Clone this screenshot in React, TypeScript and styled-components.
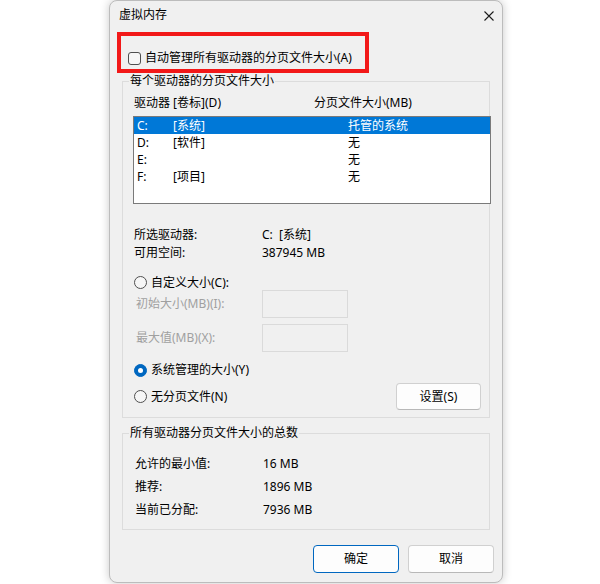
import React from "react";
import styled, { createGlobalStyle } from "styled-components";

const Global = createGlobalStyle`
  html, body { margin: 0; padding: 0; background: #ffffff; }
  body {
    font-family: "Microsoft YaHei UI", "Noto Sans", "Noto Sans CJK SC", sans-serif;
    font-size: 12px;
    color: #000000;
  }
  * { box-sizing: border-box; }
`;

const Desktop = styled.div`
  width: 600px;
  height: 584px;
  overflow: hidden;
  background: #ffffff;
  padding-left: 109px;
`;

const Window = styled.div`
  width: 394px;
  height: 583px;
  background: #f0f0f0;
  border: 1px solid #bcbcbc;
  border-radius: 8px;
  box-shadow: 0 0 10px rgba(0, 0, 0, 0.22);
  display: flex;
  flex-direction: column;
`;

const TitleBar = styled.div`
  height: 29px;
  display: flex;
  align-items: center;
  justify-content: space-between;
  padding: 0 8px 0 9px;
`;

const Title = styled.span`
  line-height: 16px;
  margin-top: -2px;
`;

const CloseButton = styled.div`
  width: 10px;
  height: 10px;
  display: flex;
`;

const Body = styled.div`
  display: flex;
  flex-direction: column;
  padding: 0 12px;
`;

const Highlight = styled.div`
  margin: 2px 0 0 -5px;
  width: 252px;
  height: 41px;
  border: 4px solid #f21818;
  padding: 11px 0 0 7px;
  display: flex;
  align-items: center;
  gap: 4px;
  line-height: 16px;
`;

const CheckBox = styled.span`
  width: 13px;
  height: 13px;
  border: 1px solid #4f4f4f;
  border-radius: 3px;
  background: #f6f6f6;
  flex: none;
`;

const Group = styled.div<{ $top: number; $bottom: number }>`
  margin-top: ${(p) => p.$top}px;
  border: 1px solid #dcdcdc;
  display: flex;
  flex-direction: column;
  padding-bottom: ${(p) => p.$bottom}px;
`;

const Legend = styled.span`
  align-self: flex-start;
  margin: -9px 0 0 6px;
  padding: 0 1px;
  background: #f0f0f0;
  line-height: 16px;
  height: 16px;
`;

const ColumnHeader = styled.div`
  display: grid;
  grid-template-columns: 180px 1fr;
  margin-top: 6px;
  padding-left: 11px;
  line-height: 16px;
`;

const ListBox = styled.div`
  margin: 5px -2px 0 10px;
  height: 88px;
  border: 1px solid #7a7a7a;
  background: #ffffff;
  display: flex;
  flex-direction: column;
`;

const ListRow = styled.div<{ $selected?: boolean }>`
  height: 17px;
  line-height: 17px;
  display: grid;
  grid-template-columns: 36px 175px 1fr;
  padding-left: 3px;
  background: ${(p) => (p.$selected ? "#0078d7" : "transparent")};
  color: ${(p) => (p.$selected ? "#ffffff" : "#000000")};
`;

const InfoGrid = styled.div<{ $top: number; $left: number; $row: number }>`
  display: grid;
  grid-template-columns: 128px 1fr;
  grid-auto-rows: ${(p) => p.$row}px;
  align-items: center;
  margin-top: ${(p) => p.$top}px;
  padding-left: ${(p) => p.$left}px;
  line-height: 16px;
`;

const RadioRow = styled.div<{ $top: number; $height: number }>`
  display: flex;
  align-items: center;
  gap: 4px;
  margin-top: ${(p) => p.$top}px;
  height: ${(p) => p.$height}px;
  padding: 0 8px 0 11px;
  line-height: 16px;
`;

const Radio = styled.span<{ $checked?: boolean }>`
  width: 13px;
  height: 13px;
  border-radius: 50%;
  flex: none;
  border: 1px solid ${(p) => (p.$checked ? "#0067c0" : "#4f4f4f")};
  background: ${(p) => (p.$checked ? "#0067c0" : "#f6f6f6")};
  display: flex;
  align-items: center;
  justify-content: center;
  &::after {
    content: "";
    width: 5px;
    height: 5px;
    border-radius: 50%;
    background: #ffffff;
    display: ${(p) => (p.$checked ? "block" : "none")};
  }
`;

const Spacer = styled.span`
  flex: 1;
`;

const FieldRow = styled.div<{ $top: number }>`
  display: flex;
  align-items: center;
  height: 28px;
  margin-top: ${(p) => p.$top}px;
  padding-left: 13px;
  line-height: 16px;
`;

const FieldLabel = styled.span`
  width: 126px;
  color: #a0a0a0;
`;

const TextBox = styled.div`
  width: 86px;
  height: 28px;
  border: 1px solid #dadada;
  background: #f0f0f0;
`;

const Button = styled.div<{ $primary?: boolean; $w: number; $h: number }>`
  width: ${(p) => p.$w}px;
  height: ${(p) => p.$h}px;
  border-radius: 4px;
  background: #fdfdfd;
  border: 1px solid ${(p) => (p.$primary ? "#0067c0" : "#d0d0d0")};
  border-bottom-color: ${(p) => (p.$primary ? "#0067c0" : "#b8b8b8")};
  display: flex;
  align-items: center;
  justify-content: center;
  line-height: 16px;
  flex: none;
`;

const ButtonBar = styled.div`
  display: flex;
  justify-content: flex-end;
  gap: 9px;
  margin-top: 15px;
  padding-right: 8px;
`;

const drives = [
  { d: "C:", label: "[系统]", size: "托管的系统", selected: true },
  { d: "D:", label: "[软件]", size: "无" },
  { d: "E:", label: "", size: "无" },
  { d: "F:", label: "[项目]", size: "无" },
];

export default function App() {
  return (
    <>
      <Global />
      <Desktop>
        <Window>
          <TitleBar>
            <Title>虚拟内存</Title>
            <CloseButton>
              <svg width="10" height="10" viewBox="0 0 10 10">
                <path d="M0.5 0.5 L9.5 9.5 M9.5 0.5 L0.5 9.5" stroke="#1b1b1b" strokeWidth="1.1" fill="none" />
              </svg>
            </CloseButton>
          </TitleBar>
          <Body>
            <Highlight>
              <CheckBox />
              <span>自动管理所有驱动器的分页文件大小(A)</span>
            </Highlight>

            <Group $top={8} $bottom={7}>
              <Legend>每个驱动器的分页文件大小</Legend>
              <ColumnHeader>
                <span>驱动器 [卷标](D)</span>
                <span>分页文件大小(MB)</span>
              </ColumnHeader>
              <ListBox>
                {drives.map((r) => (
                  <ListRow key={r.d} $selected={r.selected}>
                    <span>{r.d}</span>
                    <span>{r.label}</span>
                    <span>{r.size}</span>
                  </ListRow>
                ))}
              </ListBox>
              <InfoGrid $top={22} $left={11} $row={18}>
                <span>所选驱动器:</span>
                <span>C:&nbsp;&nbsp;[系统]</span>
                <span>可用空间:</span>
                <span>387945 MB</span>
              </InfoGrid>
              <RadioRow $top={13} $height={15}>
                <Radio />
                <span>自定义大小(C):</span>
              </RadioRow>
              <FieldRow $top={0}>
                <FieldLabel>初始大小(MB)(I):</FieldLabel>
                <TextBox />
              </FieldRow>
              <FieldRow $top={6}>
                <FieldLabel>最大值(MB)(X):</FieldLabel>
                <TextBox />
              </FieldRow>
              <RadioRow $top={10} $height={16}>
                <Radio $checked />
                <span>系统管理的大小(Y)</span>
              </RadioRow>
              <RadioRow $top={5} $height={27}>
                <Radio />
                <span>无分页文件(N)</span>
                <Spacer />
                <Button $w={85} $h={27}>设置(S)</Button>
              </RadioRow>
            </Group>

            <Group $top={15} $bottom={8}>
              <Legend>所有驱动器分页文件大小的总数</Legend>
              <InfoGrid $top={11} $left={12} $row={23}>
                <span>允许的最小值:</span>
                <span>16 MB</span>
                <span>推荐:</span>
                <span>1896 MB</span>
                <span>当前已分配:</span>
                <span>7936 MB</span>
              </InfoGrid>
            </Group>
          </Body>
          <ButtonBar>
            <Button $primary $w={86} $h={28}>确定</Button>
            <Button $w={86} $h={28}>取消</Button>
          </ButtonBar>
        </Window>
      </Desktop>
    </>
  );
}
